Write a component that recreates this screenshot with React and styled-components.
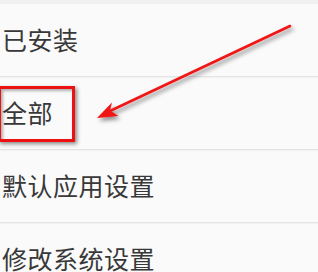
import React from "react";
import styled, { createGlobalStyle } from "styled-components";

const GlobalStyle = createGlobalStyle`
  html, body {
    margin: 0;
    padding: 0;
    background: #fafafa;
  }
  body {
    font-family: "Noto Sans CJK SC", "Noto Sans", sans-serif;
    overflow: hidden;
  }
`;

const items = ["已安装", "全部", "默认应用设置", "修改系统设置"];

function App() {
  return (
    <>
      <GlobalStyle />
      <Screen>
        <TopBand />
        <List>
          {items.map((label, i) => (
            <Row key={label} $last={i === items.length - 1}>
              <Label $highlight={label === "全部"}>{label}</Label>
            </Row>
          ))}
        </List>
        {/* annotation arrow pointing at the highlighted row */}
        <Arrow width="318" height="272" viewBox="0 0 318 272">
          <defs>
            <filter id="shadow" x="-20%" y="-20%" width="140%" height="140%">
              <feDropShadow dx="2" dy="3" stdDeviation="2" floodColor="#000" floodOpacity="0.45" />
            </filter>
          </defs>
          <g filter="url(#shadow)">
            <line x1="290" y1="26" x2="110" y2="111" stroke="#f01616" strokeWidth="2.6" strokeLinecap="round" />
            <polygon points="97,118 112,102.5 110,110.5 118.5,116" fill="#f01616" />
          </g>
        </Arrow>
      </Screen>
    </>
  );
}

const Screen = styled.div`
  position: relative;
  width: 318px;
  height: 272px;
  overflow: hidden;
  background: #fafafa;
`;

const TopBand = styled.div`
  height: 4px;
  background: #f1f1f1;
`;

const List = styled.div`
  display: flex;
  flex-direction: column;
`;

const Row = styled.div`
  height: 72px;
  display: flex;
  align-items: center;
  padding-left: 2px;
  border-bottom: ${(p) => (p.$last ? "none" : "1px solid #e4e4e4")};
  box-shadow: ${(p) => (p.$last ? "none" : "0 1px 1px rgba(0,0,0,0.03)")};
`;

const Label = styled.span`
  position: relative;
  font-size: 25px;
  line-height: 1;
  color: #383838;
  letter-spacing: 0.5px;
  margin-top: -1px;

  ${(p) =>
    p.$highlight &&
    `
    &::after {
      content: "";
      position: absolute;
      left: -4px;
      top: -14px;
      width: 71px;
      height: 50px;
      border: 3px solid #ee1111;
      box-shadow: 2px 2px 4px rgba(0,0,0,0.45), inset 2px 2px 3px rgba(0,0,0,0.3);
    }
  `}
`;

const Arrow = styled.svg`
  position: absolute;
  left: 0;
  top: 0;
  pointer-events: none;
`;

export default App;
